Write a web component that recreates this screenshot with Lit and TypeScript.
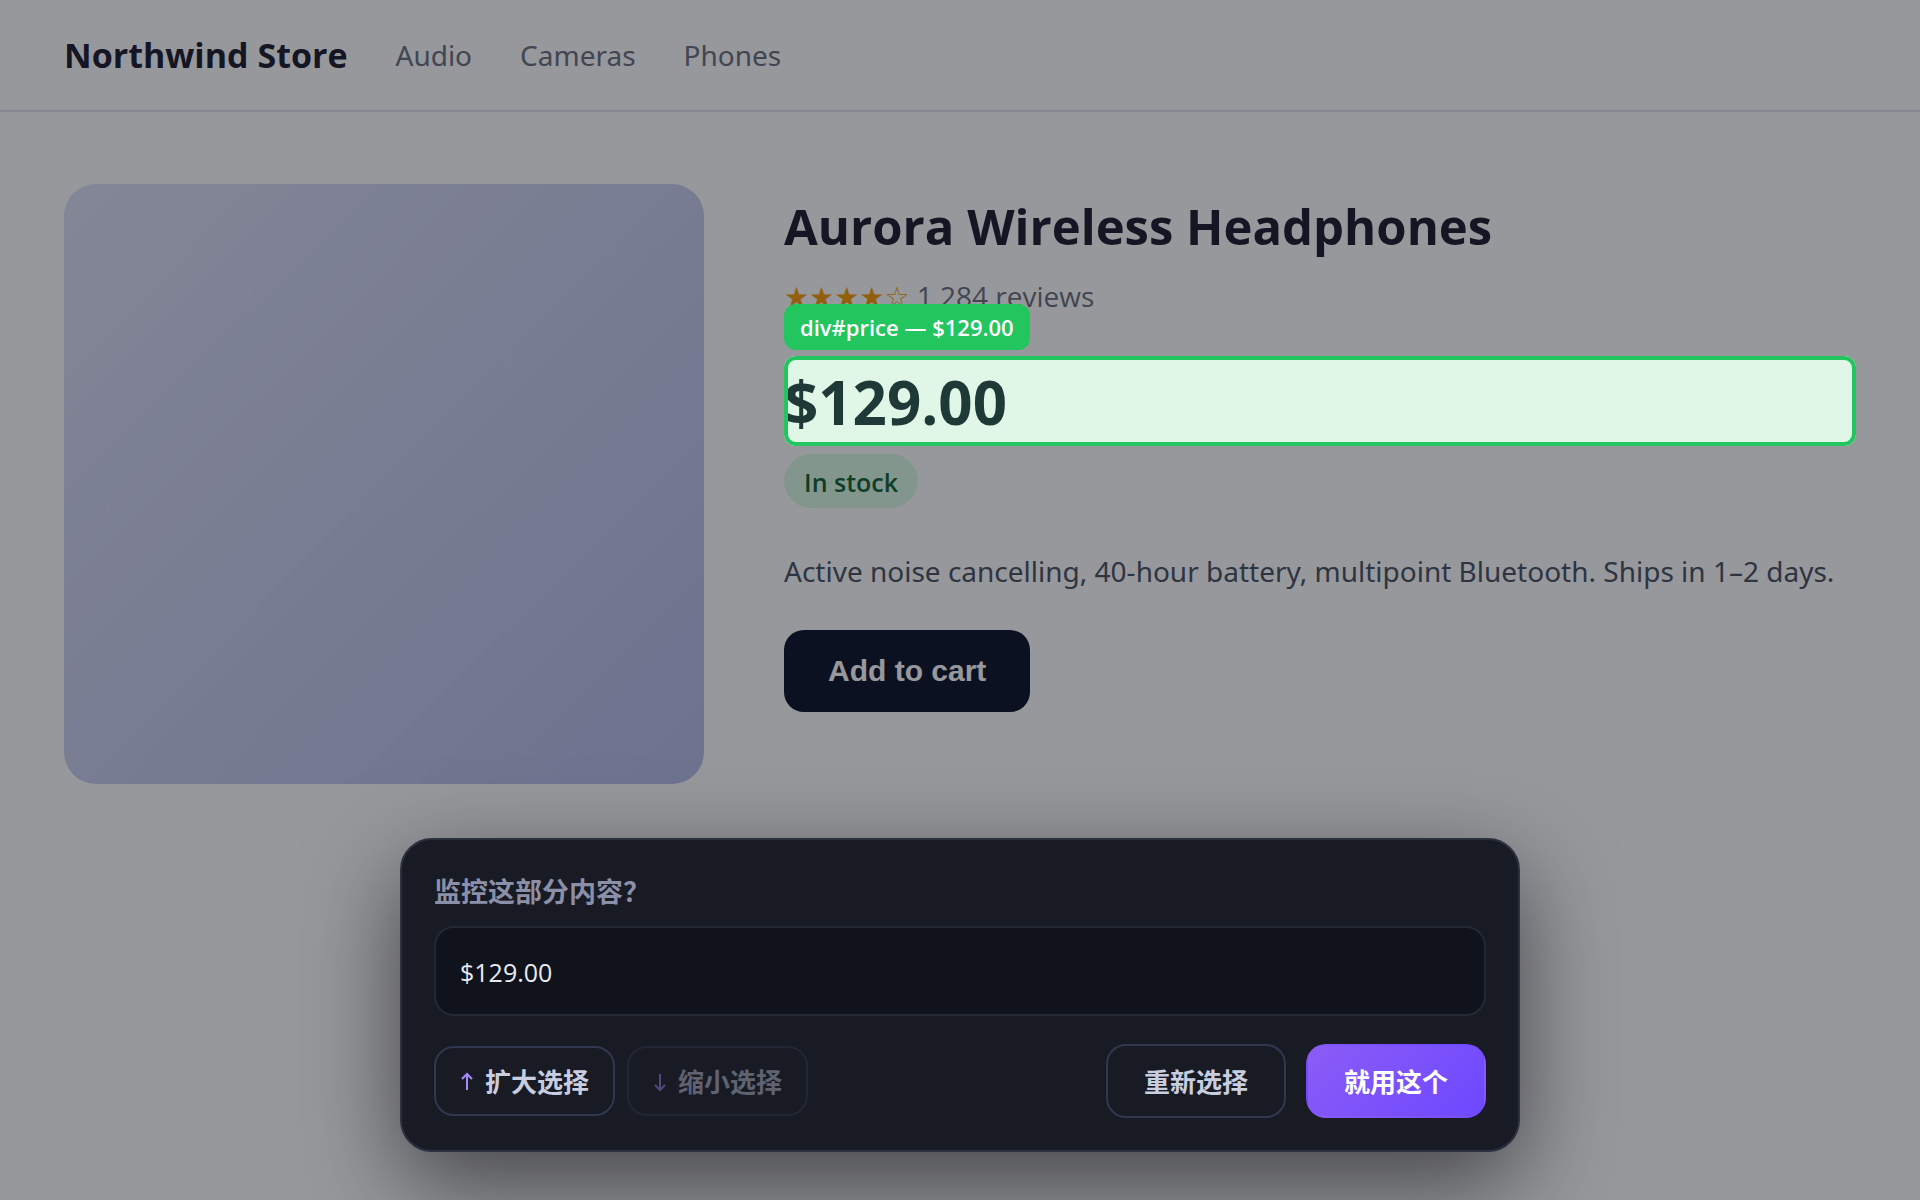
import { LitElement, html, css } from "lit";
import { customElement, property, state } from "lit/decorators.js";

@customElement("picker-panel")
export class PickerPanel extends LitElement {
  @property() value = "";

  static styles = css`
    :host {
      display: block;
      box-sizing: border-box;
      padding: 32px;
      border: 2px solid #2a303e;
      border-radius: 32px;
      background: #181b24;
      box-shadow: 0 32px 96px rgba(0, 0, 0, 0.55);
      color: #c9cde0;
      font-family: "Open Sans", "Noto Sans CJK SC", sans-serif;
      font-size: 26px;
      line-height: 36px;
    }
    .form {
      display: flex;
      flex-direction: column;
    }
    .caption {
      padding: 2px 0 16px;
      color: #8b90a8;
      font-size: 27px;
      font-weight: 700;
    }
    .value {
      box-sizing: border-box;
      width: 100%;
      height: 90px;
      padding: 2px 24px 0;
      border: 2px solid #232835;
      border-radius: 20px;
      outline: none;
      background: #10131b;
      color: #e8eaf2;
      font: inherit;
      font-size: 25px;
    }
    .actions {
      display: flex;
      align-items: center;
      gap: 12px;
      margin-top: 28px;
    }
    .resize,
    .confirm {
      display: flex;
      align-items: center;
    }
    .resize {
      gap: 12px;
      margin-right: auto;
    }
    .confirm {
      gap: 20px;
    }
    .btn {
      display: flex;
      align-items: center;
      gap: 12px;
      margin: 0;
      padding: 18px 36px 16px;
      border: 2px solid #30374f;
      border-radius: 20px;
      background: transparent;
      color: inherit;
      font: inherit;
      font-weight: 700;
      cursor: pointer;
    }
    .small {
      padding: 16px 24px 14px;
    }
    .small:disabled {
      opacity: 0.4;
      cursor: default;
    }
    .primary {
      border-color: transparent;
      background: linear-gradient(135deg, #8b5cf6, #6d48ff);
      color: #ffffff;
    }
    .arrow {
      width: 13px;
      height: 20px;
      fill: none;
      stroke: #a78bfa;
      stroke-width: 2;
    }
  `;

  render() {
    return html`
      <form class="form" @submit=${(e: Event) => e.preventDefault()}>
        <label class="caption" for="value">监控这部分内容？</label>
        <input class="value" id="value" type="text" readonly .value=${this.value} />
        <div class="actions">
          <div class="resize">
            <button class="btn small" type="button">
              <svg class="arrow" viewBox="0 0 13 20" aria-hidden="true">
                <path d="M7 18V2M2 7l5-5 5 5" />
              </svg>
              扩大选择
            </button>
            <button class="btn small" type="button" disabled>
              <svg class="arrow" viewBox="0 0 13 20" aria-hidden="true">
                <path d="M7 2v16M2 13l5 5 5-5" />
              </svg>
              缩小选择
            </button>
          </div>
          <div class="confirm">
            <button class="btn" type="button">重新选择</button>
            <button class="btn primary" type="submit">就用这个</button>
          </div>
        </div>
      </form>
    `;
  }
}

@customElement("app-root")
export class AppRoot extends LitElement {
  @state() private price = "$129.00";

  private links = ["Audio", "Cameras", "Phones"];

  static styles = css`
    :host {
      display: block;
      position: relative;
      box-sizing: border-box;
      min-height: 100vh;
      overflow: hidden;
      background: #ffffff;
      color: #1e2230;
      font-family: "Open Sans", "Noto Sans", sans-serif;
      font-size: 28px;
      line-height: 40px;
    }
    .header {
      display: flex;
      align-items: center;
      gap: 48px;
      padding: 31px 64px;
      border-bottom: 2px solid #e2e3ec;
    }
    .brand {
      font-size: 34px;
      line-height: 48px;
      font-weight: 700;
    }
    .nav {
      display: flex;
      gap: 48px;
      font-family: "Noto Sans", sans-serif;
    }
    .link {
      color: #6b7280;
      text-decoration: none;
    }
    .product {
      display: grid;
      grid-template-columns: 640px minmax(0, 1fr);
      gap: 80px;
      padding: 72px 64px;
    }
    .photo {
      height: 600px;
      border-radius: 32px;
      background: linear-gradient(135deg, #dde1f4, #b8bee9);
    }
    .title {
      margin: 8px 0 16px;
      font-size: 49px;
      line-height: 68px;
      font-weight: 700;
    }
    .rating {
      margin: 0 0 38px;
      color: #6b7280;
    }
    .stars {
      color: #f59e0b;
      font-family: "DejaVu Sans", sans-serif;
    }
    .price {
      position: relative;
      padding-top: 2px;
      font-size: 60px;
      line-height: 88px;
      font-weight: 700;
    }
    .highlight {
      position: absolute;
      inset: 0;
      z-index: 1;
      border: 4px solid #22c55e;
      border-radius: 12px;
      background: rgba(34, 197, 94, 0.14);
      box-shadow: 0 0 0 9999px rgba(8, 10, 18, 0.42);
    }
    .tag {
      position: absolute;
      left: 0;
      bottom: calc(100% + 6px);
      z-index: 2;
      padding: 7px 16px;
      border-radius: 12px;
      background: #22c55e;
      color: #ffffff;
      font-size: 22px;
      line-height: 32px;
      font-weight: 600;
      white-space: nowrap;
    }
    .stock {
      display: table;
      margin-top: 8px;
      padding: 10px 20px 8px;
      border-radius: 999px;
      background: #dcfce7;
      color: #166534;
      font-size: 25px;
      line-height: 36px;
      font-weight: 600;
    }
    .about {
      margin: 43px 0 39px;
      color: #4b5563;
      font-family: "Noto Sans", sans-serif;
    }
    .cart {
      padding: 24px 44px;
      border: 0;
      border-radius: 20px;
      background: #0f172a;
      color: #ffffff;
      font-family: "Liberation Sans", Arial, sans-serif;
      font-size: 30px;
      line-height: 34px;
      font-weight: 700;
    }
    .panel {
      position: absolute;
      left: 50%;
      bottom: 48px;
      z-index: 3;
      width: 1120px;
      max-width: calc(100% - 64px);
      transform: translateX(-50%);
    }
  `;

  render() {
    return html`
      <header class="header">
        <div class="brand">Northwind Store</div>
        <nav class="nav">
          ${this.links.map((name) => html`<a class="link" href="#">${name}</a>`)}
        </nav>
      </header>
      <main class="product">
        <div class="photo"></div>
        <section>
          <h1 class="title">Aurora Wireless Headphones</h1>
          <p class="rating"><span class="stars">★★★★☆</span> 1,284 reviews</p>
          <div class="price">
            ${this.price}
            <div class="highlight"></div>
            <div class="tag">div#price — ${this.price}</div>
          </div>
          <span class="stock">In stock</span>
          <p class="about">
            Active noise cancelling, 40-hour battery, multipoint Bluetooth. Ships in 1–2 days.
          </p>
          <button class="cart" type="button">Add to cart</button>
        </section>
      </main>
      <picker-panel class="panel" .value=${this.price}></picker-panel>
    `;
  }
}
